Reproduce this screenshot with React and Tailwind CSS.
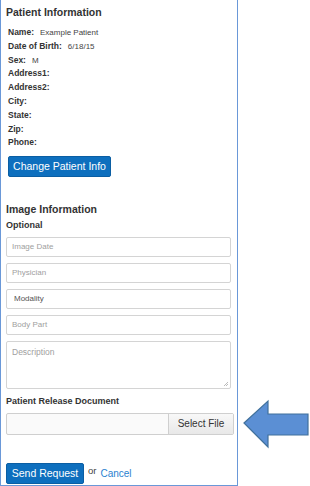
export default function App() {
  const rows = [
    ["Name:", "Example Patient"],
    ["Date of Birth:", "6/18/15"],
    ["Sex:", "M"],
    ["Address1:", ""],
    ["Address2:", ""],
    ["City:", ""],
    ["State:", ""],
    ["Zip:", ""],
    ["Phone:", ""],
  ];
  const inputs = ["Image Date", "Physician"];
  return (
    <div
      className="relative w-[310px] h-[486px] bg-white text-[#333]"
      style={{ fontFamily: '"Liberation Sans", Arial, sans-serif' }}
    >
      <div className="w-[238px] h-[486px] border-l border-r border-b border-[#6a98d8] flex flex-col pl-[4px] pr-[7px]">
        <h2 className="text-[10.5px] leading-[16px] font-bold mt-[4px] pl-[1px] whitespace-nowrap">Patient Information</h2>
        <div className="flex flex-col mt-[6px] pl-[3px]">
          {rows.map(([l, v]) => (
            <div key={l} className="leading-[13.8px] flex gap-[6px] whitespace-nowrap">
              <span className="font-bold text-[8.5px]">{l}</span>
              <span className="text-[#444] text-[8px]">{v}</span>
            </div>
          ))}
        </div>
        <div className="flex pl-[3px] mt-[6px]">
          <button className="h-[21px] w-[103px] bg-[#0e6fbe] border border-[#0b5ea3] rounded-[2px] text-white text-[10.5px] leading-[19px] whitespace-nowrap">
            Change Patient Info
          </button>
        </div>
        <h2 className="text-[10.5px] leading-[16px] font-bold mt-[24px] pl-[1px] whitespace-nowrap">Image Information</h2>
        <div className="text-[9px] leading-[14px] font-bold mt-[1px] pl-[1px]">Optional</div>
        <div className="flex flex-col gap-[6px] mt-[5px] pl-[1px]">
          {inputs.map((p) => (
            <div key={p} className="h-[20px] w-[225px] border border-[#d4d4d4] rounded-[2px] text-[8px] leading-[18px] text-[#a0a0a0] pl-[5px]">
              {p}
            </div>
          ))}
          <div className="h-[20px] w-[225px] border border-[#d4d4d4] rounded-[2px] text-[8px] leading-[18px] text-[#555] pl-[7px]">
            Modality
          </div>
          <div className="h-[20px] w-[225px] border border-[#d4d4d4] rounded-[2px] text-[8px] leading-[18px] text-[#a0a0a0] pl-[5px]">
            Body Part
          </div>
          <div className="relative h-[48px] w-[225px] border border-[#d4d4d4] rounded-[2px] text-[8.5px] leading-[12px] text-[#a0a0a0] pl-[5px] pt-[4px]">
            Description
            <svg className="absolute right-[1px] bottom-[1px]" width="6" height="6" viewBox="0 0 6 6">
              <path d="M5 1 L1 5 M5 3 L3 5" stroke="#aaa" strokeWidth="0.8" />
            </svg>
          </div>
        </div>
        <div className="text-[9px] leading-[13px] font-bold mt-[6px] pl-[1px] whitespace-nowrap">Patient Release Document</div>
        <div className="flex mt-[5px] ml-[1px] w-[228px] h-[22px] border border-[#cfcfcf] rounded-[2px] bg-[#fafafa]">
          <div className="flex-1" />
          <div className="w-[65px] h-full border-l border-[#cfcfcf] bg-gradient-to-b from-[#f8f8f8] to-[#e8e8e8] text-[10px] leading-[20px] text-[#333] text-center whitespace-nowrap">
            Select File
          </div>
        </div>
        <div className="flex items-center mt-[28px] pl-[1px] gap-[4px]">
          <button className="h-[21px] w-[78px] bg-[#0e6fbe] border border-[#0b5ea3] rounded-[2px] text-white text-[10.5px] leading-[19px] whitespace-nowrap">
            Send Request
          </button>
          <span className="text-[9.5px] text-[#444] -mt-[5px]">or</span>
          <span className="text-[10px] text-[#2a7fd0] -mt-[1px]">Cancel</span>
        </div>
      </div>
      <svg className="absolute left-[242px] top-[399px]" width="68" height="50" viewBox="0 0 68 50">
        <path
          d="M2 24 L26 2 L26 15 L66 15 L66 36 L26 36 L26 48 Z"
          fill="#5b8fd4"
          stroke="#41719c"
          strokeWidth="1.2"
          strokeLinejoin="miter"
        />
      </svg>
    </div>
  );
}
